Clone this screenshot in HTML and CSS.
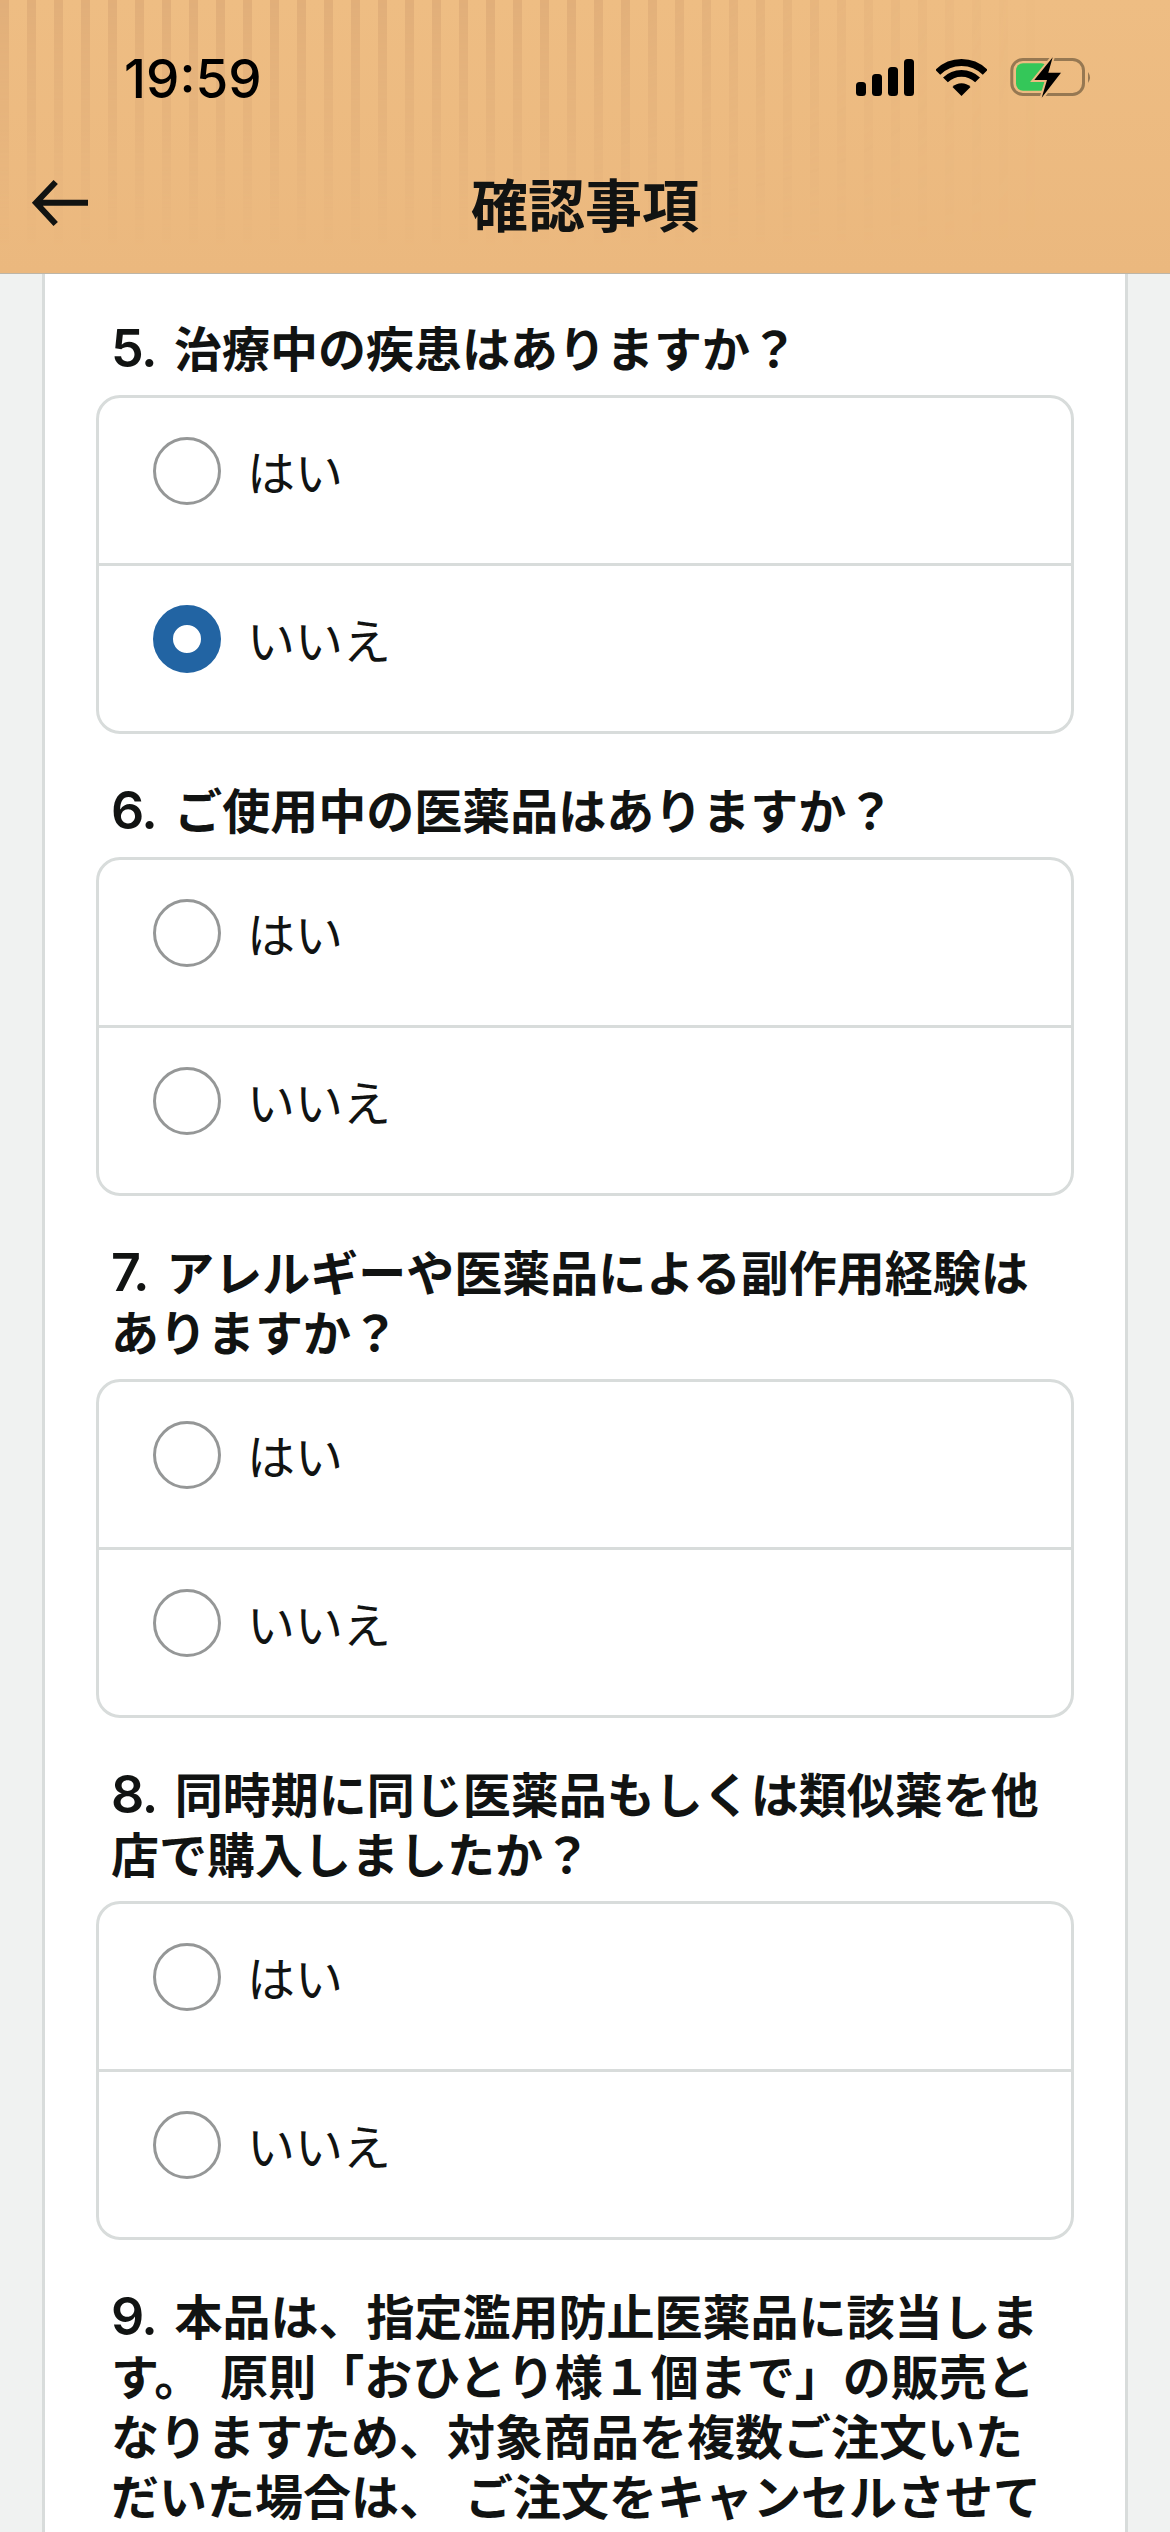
FILE: index.html
```html
<!DOCTYPE html>
<html lang="ja">
<head>
<meta charset="utf-8">
<title>確認事項</title>
<link rel="stylesheet" href="styles.css">
</head>
<body>
<div class="screen">
  <header class="app-header">
    <div class="status-bar">
      <span class="clock">19:59</span>
      <div class="status-icons">
        <svg class="signal" width="58" height="37" viewBox="0 0 58 37" aria-hidden="true">
          <rect x="0" y="23" width="10" height="14" rx="3.5"/>
          <rect x="16" y="15" width="10" height="22" rx="3.5"/>
          <rect x="32" y="8" width="10" height="29" rx="3.5"/>
          <rect x="48" y="0" width="10" height="37" rx="3.5"/>
        </svg>
        <svg class="wifi" width="51" height="37" viewBox="0 0 51 37" aria-hidden="true">
          <path class="wifi-arc" d="M1.8 13.3A33.5 33.5 0 0 1 49.2 13.3"/>
          <path class="wifi-arc" d="M9.45 20.95A22.7 22.7 0 0 1 41.55 20.95"/>
          <path d="M25.5 37L16.5 28A12.7 12.7 0 0 1 34.5 28Z"/>
        </svg>
        <svg class="battery" width="84" height="43" viewBox="0 0 84 43" aria-hidden="true">
          <rect class="battery-body" x="2.8" y="3.5" width="71.7" height="35" rx="11"/>
          <path class="battery-nub" d="M79 16Q83 21.5 79 27Z"/>
          <rect class="battery-fill" x="7" y="7.3" width="32" height="27.4" rx="7"/>
          <path class="battery-bolt" d="M43.7 1.3L25.3 24H38L32.7 41.7L52 16.7H39.3Z"/>
        </svg>
      </div>
    </div>
    <div class="nav-bar">
      <svg class="back" width="60" height="50" viewBox="0 0 60 50" aria-hidden="true">
        <path d="M58 24.7H7M25.7 4L6 24.7L25.7 46"/>
      </svg>
      <h1 class="title">確認事項</h1>
    </div>
  </header>

  <main class="card">
    <section class="question">
      <h2 class="question-text">5. 治療中の疾患はありますか？</h2>
      <div class="choices">
        <label class="choice"><input class="radio" type="radio" name="q5"><span>はい</span></label>
        <label class="choice"><input class="radio" type="radio" name="q5" checked><span>いいえ</span></label>
      </div>
    </section>
    <section class="question">
      <h2 class="question-text">6. ご使用中の医薬品はありますか？</h2>
      <div class="choices">
        <label class="choice"><input class="radio" type="radio" name="q6"><span>はい</span></label>
        <label class="choice"><input class="radio" type="radio" name="q6"><span>いいえ</span></label>
      </div>
    </section>
    <section class="question">
      <h2 class="question-text">7. アレルギーや医薬品による副作用経験はありますか？</h2>
      <div class="choices">
        <label class="choice"><input class="radio" type="radio" name="q7"><span>はい</span></label>
        <label class="choice"><input class="radio" type="radio" name="q7"><span>いいえ</span></label>
      </div>
    </section>
    <section class="question">
      <h2 class="question-text">8. 同時期に同じ医薬品もしくは類似薬を他店で購入しましたか？</h2>
      <div class="choices">
        <label class="choice"><input class="radio" type="radio" name="q8"><span>はい</span></label>
        <label class="choice"><input class="radio" type="radio" name="q8"><span>いいえ</span></label>
      </div>
    </section>
    <section class="question">
      <h2 class="question-text">9. 本品は、指定濫用防止医薬品に該当します。 原則「おひとり様１個まで」の販売となりますため、対象商品を複数ご注文いただいた場合は、 ご注文をキャンセルさせて</h2>
    </section>
  </main>
</div>
</body>
</html>
```
FILE: styles.css
```css
* {
  box-sizing: border-box;
}

html,
body {
  margin: 0;
  padding: 0;
}

body {
  background: #f0f2f1;
  color: #111312;
  font-family: "Noto Sans CJK JP", "Noto Sans", sans-serif;
}

.screen {
  display: flex;
  flex-direction: column;
  width: 1170px;
  height: 2532px;
  overflow: hidden;
}

.app-header {
  position: relative;
  flex: none;
  height: 274px;
  background: linear-gradient(180deg, #eebd83 0%, #ebb87e 100%);
  border-bottom: 1px solid #bdb6a8;
}

.app-header::before {
  content: "";
  position: absolute;
  inset: 0;
  background: repeating-linear-gradient(90deg, #dba875 0, #dba875 9px, transparent 9px, transparent 27px);
  -webkit-mask-image: linear-gradient(180deg, rgba(0, 0, 0, 0.68) 0%, rgba(0, 0, 0, 0.42) 30%, rgba(0, 0, 0, 0) 90%),
    linear-gradient(90deg, #000 0%, #000 50%, transparent 90%);
  -webkit-mask-composite: source-in;
  mask-image: linear-gradient(180deg, rgba(0, 0, 0, 0.68) 0%, rgba(0, 0, 0, 0.42) 30%, rgba(0, 0, 0, 0) 90%),
    linear-gradient(90deg, #000 0%, #000 50%, transparent 90%);
  mask-composite: intersect;
}

.status-bar {
  position: relative;
  display: flex;
  justify-content: space-between;
  align-items: flex-start;
  height: 168px;
  padding: 0 77px 0 124px;
}

.clock {
  margin-top: 49px;
  color: #000;
  font-family: Inter, "Liberation Sans", sans-serif;
  font-size: 53px;
  font-weight: 500;
  line-height: 60px;
}

.status-icons {
  display: flex;
  align-items: center;
  gap: 22px;
  margin-top: 56px;
}

.signal,
.wifi {
  fill: #000;
}

.wifi-arc {
  fill: none;
  stroke: #000;
  stroke-width: 6.8;
}

.battery-body {
  fill: none;
  stroke: #967852;
  stroke-width: 3;
}

.battery-nub {
  fill: #967852;
}

.battery-fill {
  fill: #34c759;
}

.battery-bolt {
  fill: #000;
  stroke: #ecba80;
  stroke-width: 4;
  paint-order: stroke;
}

.nav-bar {
  position: relative;
  display: flex;
  justify-content: center;
  align-items: center;
  height: 68px;
}

.back {
  position: absolute;
  left: 30px;
  top: 10px;
  fill: none;
  stroke: #111312;
  stroke-width: 6;
}

.title {
  margin: 0;
  font-size: 57px;
  font-weight: 700;
  line-height: 68px;
}

.card {
  flex: 1;
  margin: 0 42px;
  padding: 46px 51px 0;
  background: #fff;
  border-left: 3px solid #d8dcdb;
  border-right: 3px solid #d8dcdb;
}

.question {
  margin-bottom: 48px;
}

.question-text {
  margin: 0 0 15px;
  padding: 0 14px 0 15px;
  font-family: Inter, "Noto Sans CJK JP", "Noto Sans", sans-serif;
  font-size: 48px;
  font-weight: 600;
  line-height: 60px;
  word-spacing: 6px;
}

.question-text::first-letter {
  font-size: 52px;
  line-height: 1;
  letter-spacing: -1.5px;
}

.choices {
  display: flex;
  flex-direction: column;
  background: #fff;
  border: 3px solid #d8dcdb;
  border-radius: 24px;
}

.choice {
  display: flex;
  align-items: center;
  gap: 26px;
  height: 165px;
  padding: 38px 0 59px 54px;
  font-size: 48px;
  font-weight: 400;
  line-height: 64px;
}

.choice + .choice {
  height: 168px;
  border-top: 3px solid #d8dcdb;
}

.radio {
  flex: none;
  appearance: none;
  -webkit-appearance: none;
  width: 68px;
  height: 68px;
  margin: 1px 0 0;
  background: #fff;
  border: 3px solid #959797;
  border-radius: 50%;
}

.radio:checked {
  border: 20px solid #2264a3;
}
```
